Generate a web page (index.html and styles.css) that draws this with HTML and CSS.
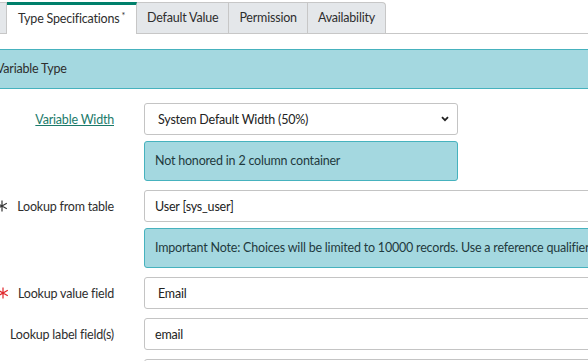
FILE: index.html
```html
<!DOCTYPE html>
<html lang="en">
<head>
    <meta charset="UTF-8">
    <title>Variable - Type Specifications</title>
    <link rel="stylesheet" href="styles.css">
</head>
<body>
    <div class="tabs">
        <div class="tab tab-stub"></div>
        <div class="tab active">Type Specifications<sup>*</sup></div>
        <div class="tab">Default Value</div>
        <div class="tab">Permission</div>
        <div class="tab last">Availability</div>
    </div>

    <div class="section">
        <div class="banner">Variable Type</div>

        <div class="form">
            <div class="group">
                <div class="label"><a href="#">Variable Width</a></div>
                <div class="field">
                    <div class="select narrow">
                        <span>System Default Width (50%)</span>
                        <svg class="chevron" width="8" height="6" viewBox="0 0 8 6"><path d="M1 1.2 L4 4.2 L7 1.2" fill="none" stroke="#222" stroke-width="1.8"/></svg>
                    </div>
                    <div class="info narrow">Not honored in 2 column container</div>
                </div>
            </div>

            <div class="group">
                <div class="label">
                    <svg class="req" width="12" height="12" viewBox="0 0 12 12"><path d="M6 0.5 V11.5 M1.2 3.3 L10.8 8.7 M1.2 8.7 L10.8 3.3" stroke="#333" stroke-width="1.2"/></svg>
                    <span>Lookup from table</span>
                </div>
                <div class="field">
                    <div class="input">User [sys_user]</div>
                    <div class="info">Important Note: Choices will be limited to 10000 records. Use a reference qualifier to narrow the list.</div>
                </div>
            </div>

            <div class="group">
                <div class="label">
                    <svg class="req" width="12" height="12" viewBox="0 0 12 12"><path d="M6 0.5 V11.5 M1.2 3.3 L10.8 8.7 M1.2 8.7 L10.8 3.3" stroke="#e0262b" stroke-width="1.2"/></svg>
                    <span>Lookup value field</span>
                </div>
                <div class="field">
                    <div class="select"><span>Email</span></div>
                </div>
            </div>

            <div class="group">
                <div class="label"><span>Lookup label field(s)</span></div>
                <div class="field">
                    <div class="input">email</div>
                </div>
            </div>

            <div class="group">
                <div class="label"><span></span></div>
                <div class="field">
                    <div class="input"></div>
                </div>
            </div>
        </div>
    </div>
</body>
</html>
```

FILE: styles.css
```css
* {
    box-sizing: border-box;
    margin: 0;
    padding: 0;
}

body {
    font-family: Lato, 'Noto Sans', sans-serif;
    font-size: 12.5px;
    letter-spacing: -0.2px;
    color: #2e2e2e;
    background: white;
    overflow: hidden;
    width: 588px;
    height: 361px;
}

/* Tabs */
.tabs {
    display: flex;
    padding-top: 2px;
    border-bottom: 1px solid #c7c7c7;
    height: 34px;
}

.tab {
    background: #e4e7ea;
    border: 1px solid #c7c7c7;
    border-bottom: none;
    padding: 0 10px;
    line-height: 30px;
    height: 31px;
    color: #2e2e2e;
    white-space: nowrap;
}

.tab + .tab {
    border-left: none;
}

.tab-stub {
    width: 7px;
    padding: 0;
    border-left: none;
}

.tab.active {
    background: white;
    border-top: 3px solid #00806b;
    padding: 0 11px;
    line-height: 27px;
    height: 32px;
    border-left: none;
}

.tab.last {
    border-top-right-radius: 4px;
}

.tab sup {
    font-size: 9px;
    line-height: 0;
    vertical-align: 4px;
    margin-left: 2px;
}

/* Section */
.section {
    margin-top: 15px;
    margin-left: -20px;
}

.banner {
    height: 40px;
    line-height: 38px;
    padding-left: 16px;
    background: #a4d8e0;
    border-top: 1px solid #46b2be;
    border-bottom: 1px solid #46b2be;
}

.form {
    padding-top: 14px;
}

.group {
    display: grid;
    grid-template-columns: 134px 500px;
    column-gap: 30px;
    margin-bottom: 9px;
}

.label {
    display: flex;
    justify-content: flex-end;
    align-items: center;
    height: 32px;
    white-space: nowrap;
}

.label a {
    color: #1b7a6a;
    text-decoration: underline;
}

.req {
    margin-right: 9px;
}

.select, .input {
    height: 32px;
    border: 1px solid #c4c4c4;
    border-radius: 3px;
    display: flex;
    align-items: center;
    background: white;
    color: #222;
}

.select {
    padding: 0 13px;
    justify-content: space-between;
}

.input {
    padding: 0 10px;
}

.narrow {
    width: 314px;
}

.chevron {
    margin-right: -5px;
}

.info {
    margin-top: 6px;
    height: 40px;
    line-height: 38px;
    padding-left: 10px;
    background: #a4d8e0;
    border: 1px solid #46b2be;
    border-radius: 3px;
    color: #1f3a3e;
    white-space: nowrap;
    overflow: hidden;
}
```
